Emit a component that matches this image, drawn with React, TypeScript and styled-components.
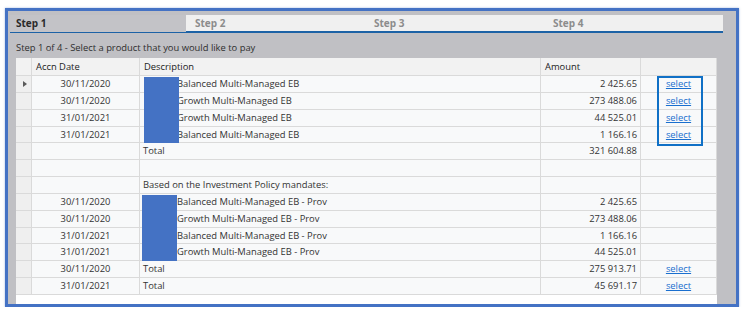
import styled, { createGlobalStyle } from 'styled-components';

const GlobalStyle = createGlobalStyle`
  html, body {
    margin: 0;
    padding: 0;
    background: #ffffff;
  }
  body {
    font-family: 'Open Sans', 'Noto Sans', sans-serif;
    font-size: 9.4px;
    color: #333;
  }
`;

type Line = {
  date?: string;
  desc?: string;
  indent?: boolean;
  amount?: string;
  select?: boolean;
  current?: boolean;
};

const lines: Line[] = [
  { date: '30/11/2020', desc: 'Balanced Multi-Managed EB', indent: true, amount: '2 425.65', select: true, current: true },
  { date: '30/11/2020', desc: 'Growth Multi-Managed EB', indent: true, amount: '273 488.06', select: true },
  { date: '31/01/2021', desc: 'Growth Multi-Managed EB', indent: true, amount: '44 525.01', select: true },
  { date: '31/01/2021', desc: 'Balanced Multi-Managed EB', indent: true, amount: '1 166.16', select: true },
  { desc: 'Total', amount: '321 604.88' },
  {},
  { desc: 'Based on the Investment Policy mandates:' },
  { date: '30/11/2020', desc: 'Balanced Multi-Managed EB - Prov', indent: true, amount: '2 425.65' },
  { date: '30/11/2020', desc: 'Growth Multi-Managed EB - Prov', indent: true, amount: '273 488.06' },
  { date: '31/01/2021', desc: 'Balanced Multi-Managed EB - Prov', indent: true, amount: '1 166.16' },
  { date: '31/01/2021', desc: 'Growth Multi-Managed EB - Prov', indent: true, amount: '44 525.01' },
  { date: '30/11/2020', desc: 'Total', amount: '275 913.71', select: true },
  { date: '31/01/2021', desc: 'Total', amount: '45 691.17', select: true },
];

const steps = ['Step 1', 'Step 2', 'Step 3', 'Step 4'];

export default function App() {
  return (
    <>
      <GlobalStyle />
      <Frame>
        <Tabs>
          {steps.map((s, i) => (
            <Tab key={s} active={i === 0}>
              {s}
            </Tab>
          ))}
        </Tabs>
        <Subtitle>Step 1 of 4 - Select a product that you would like to pay</Subtitle>
        <GridArea>
          <Row header>
            <Cell />
            <HeadCell>Accn Date</HeadCell>
            <HeadCell>Description</HeadCell>
            <HeadCell>Amount</HeadCell>
            <HeadCell />
          </Row>
          {lines.map((l, i) => (
            <Row key={i}>
              <RowHead>{l.current && <Pointer />}</RowHead>
              <Cell align="center">{l.date}</Cell>
              <Cell indent={l.indent}>{l.desc}</Cell>
              <Cell align="right">{l.amount}</Cell>
              <Cell align="center">{l.select && <SelectLink href="#">select</SelectLink>}</Cell>
            </Row>
          ))}
          <Redact style={{ left: 128, top: 19 }} />
          <Redact style={{ left: 126, top: 137 }} />
          <SelectBox />
        </GridArea>
      </Frame>
    </>
  );
}

const Pointer = () => (
  <svg width="4" height="6" viewBox="0 0 4 6">
    <path d="M0 0 L4 3 L0 6 Z" fill="#5a5a5a" />
  </svg>
);

const Frame = styled.div`
  box-sizing: border-box;
  margin: 8px 0 0 5px;
  width: 734px;
  height: 299px;
  border: 3px solid #4472c4;
  background: #c0c0c4;
  display: flex;
  flex-direction: column;
  box-shadow: 0 0 2px rgba(68, 114, 196, 0.5);
`;

const Tabs = styled.div`
  margin: 4px 13px 0 2px;
  height: 16px;
  background: #f0f0f0;
  border-bottom: 2px solid #1c62a6;
  display: grid;
  grid-template-columns: 176px 179px 179px 179px;
`;

const Tab = styled.div<{ active?: boolean }>`
  background: ${(p) => (p.active ? '#c3c3c7' : 'transparent')};
  color: ${(p) => (p.active ? '#2a2a2a' : '#8c8c8c')};
  font-weight: 700;
  font-size: 10px;
  line-height: 17px;
  padding-left: ${(p) => (p.active ? '6px' : '9px')};
`;

const Subtitle = styled.div`
  height: 25px;
  box-sizing: border-box;
  padding: 7px 0 0 8px;
  line-height: 16px;
  color: #2e2e2e;
`;

const GridArea = styled.div`
  position: relative;
  flex: 1;
  margin-left: 8px;
  width: 701px;
  background: #ffffff;
`;

const Row = styled.div<{ header?: boolean }>`
  display: grid;
  grid-template-columns: 16px 108px 401px 100px 76px;
  height: ${(p) => (p.header ? '18px' : '16.85px')};
  background: ${(p) => (p.header ? '#f2f2f2' : '#f8f9fa')};
`;

const Cell = styled.div<{ align?: 'left' | 'center' | 'right'; indent?: boolean }>`
  box-sizing: border-box;
  border-right: 1px solid #dadada;
  border-bottom: 1px solid #dadada;
  line-height: 16px;
  white-space: nowrap;
  overflow: hidden;
  text-align: ${(p) => p.align ?? 'left'};
  padding: ${(p) =>
    p.align === 'right' ? '0 3px 0 0' : p.align === 'center' ? '0' : p.indent ? '0 0 0 37px' : '0 0 0 3px'};
  color: #333;
`;

const HeadCell = styled(Cell)`
  line-height: 17px;
  padding: 0 0 0 4px;
  color: #222;
`;

const RowHead = styled(Cell)`
  background: #efefef;
  display: flex;
  align-items: center;
  justify-content: center;
`;

const SelectLink = styled.a`
  color: #1a6fcf;
  text-decoration: underline;
`;

const Redact = styled.div`
  position: absolute;
  width: 35px;
  height: 66px;
  background: #4472c4;
`;

const SelectBox = styled.div`
  position: absolute;
  left: 641px;
  top: 18px;
  width: 46px;
  height: 70px;
  box-sizing: border-box;
  border: 2px solid #1070c6;
`;
